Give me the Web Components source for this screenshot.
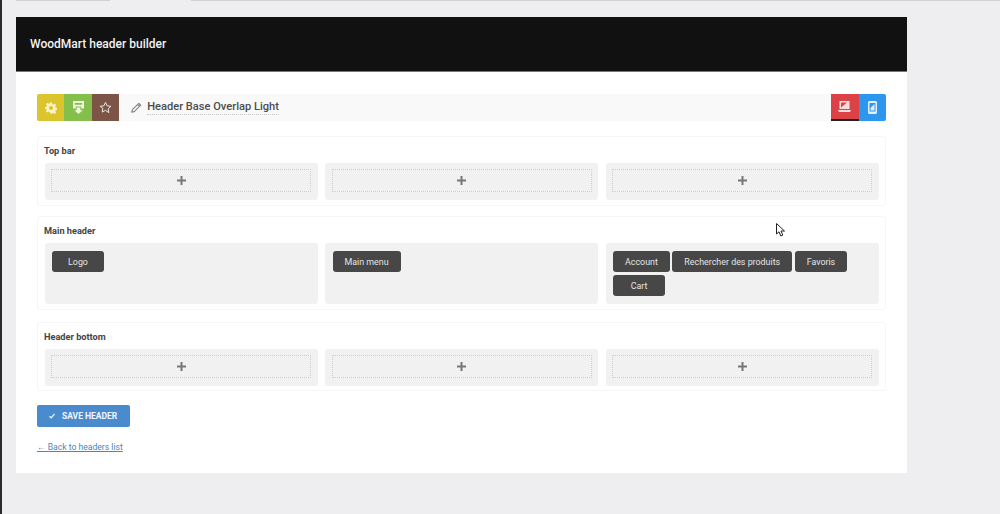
<!DOCTYPE html>
<html lang="en">
<head>
<meta charset="utf-8">
<title>WoodMart header builder</title>
<style>
  html, body { margin: 0; height: 100%; }
  body {
    background: #eeeef0;
    font-family: Roboto, "Open Sans", sans-serif;
    overflow: hidden;
  }
</style>
</head>
<body>
<wm-page>
  <wm-panel title="WoodMart header builder">
    <wm-toolbar name="Header Base Overlap Light"></wm-toolbar>

    <wm-row label="Top bar" style="--col-h:36px;--after:10px">
      <wm-col><wm-add></wm-add></wm-col>
      <wm-col><wm-add></wm-add></wm-col>
      <wm-col><wm-add></wm-add></wm-col>
    </wm-row>

    <wm-row label="Main header" style="--col-h:60px;--after:12px">
      <wm-col><wm-chip>Logo</wm-chip></wm-col>
      <wm-col><wm-chip>Main menu</wm-chip></wm-col>
      <wm-col>
        <wm-chip>Account</wm-chip>
        <wm-chip>Rechercher des produits</wm-chip>
        <wm-chip>Favoris</wm-chip>
        <wm-chip>Cart</wm-chip>
      </wm-col>
    </wm-row>

    <wm-row label="Header bottom" style="--col-h:35px;--after:14px">
      <wm-col><wm-add></wm-add></wm-col>
      <wm-col><wm-add></wm-add></wm-col>
      <wm-col><wm-add></wm-add></wm-col>
    </wm-row>

    <wm-save>SAVE HEADER</wm-save>
    <wm-back>← Back to headers list</wm-back>
  </wm-panel>
</wm-page>

<script>
class WmPage extends HTMLElement {
  constructor() {
    super();
    this.attachShadow({ mode: "open" });
  }
  connectedCallback() {
    this.shadowRoot.innerHTML = `
      <style>
        :host {
          display: block;
          position: relative;
          height: 514px;
          box-sizing: border-box;
          border-left: 2px solid #2b2b2d;
          padding: 17px 0 0 14px;
        }
        .strip { position: absolute; top: 0; height: 1px; background: #d2d2d4; }
        .cursor { position: absolute; left: 773px; top: 222px; }
      </style>
      <div class="strip" style="left:14px;width:94px"></div>
      <div class="strip" style="left:189px;width:809px"></div>
      <slot></slot>
      <svg class="cursor" width="12" height="16" viewBox="0 0 12 16">
        <path d="M1.5 1.5 V12 L4 9.8 L5.8 14 L7.8 13.1 L6 9 H9.5 Z" fill="#fff" stroke="#222" stroke-width="1"/>
      </svg>
    `;
  }
}

class WmPanel extends HTMLElement {
  constructor() {
    super();
    this.attachShadow({ mode: "open" });
  }
  connectedCallback() {
    this.shadowRoot.innerHTML = `
      <style>
        :host {
          display: block;
          width: 891px;
          height: 456px;
          background: #fff;
        }
        h1 {
          margin: 0;
          height: 55px;
          box-sizing: border-box;
          padding-left: 14px;
          display: flex;
          align-items: center;
          background: #111112;
          border-bottom: 1px solid #77777a;
          color: #f2f2f2;
          font-size: 12px;
          font-weight: 500;
        }
        .body { padding: 22px 21px 0; }
      </style>
      <h1>${this.getAttribute("title")}</h1>
      <div class="body"><slot></slot></div>
    `;
  }
}

class WmToolbar extends HTMLElement {
  constructor() {
    super();
    this.attachShadow({ mode: "open" });
  }
  connectedCallback() {
    this.shadowRoot.innerHTML = `
      <style>
        :host {
          display: flex;
          height: 27px;
          margin-bottom: 15px;
          background: #f9f9f9;
          color: #4c4c4c;
        }
        .btn {
          width: 27.4px;
          display: flex;
          align-items: center;
          justify-content: center;
          box-sizing: border-box;
        }
        .name {
          flex: 1;
          display: flex;
          align-items: center;
          gap: 5px;
          padding-left: 12px;
          font-size: 11.100px;
          font-weight: 500;
        }
        .name span { border-bottom: 1px dotted #c4c4c4; line-height: 14px; }
        .red { border-bottom: 2px solid #222; }
      </style>
      <div class="btn" style="background:#dcc42c;border-radius:2px 0 0 2px">
        <svg width="12" height="12" viewBox="0 0 24 24"><path fill="#fbf3c4" fill-rule="evenodd" d="M10 1h4l.7 3.300 2 .8L19.500 3.300l2.800 2.800-1.800 2.800.8 2 3.200.7v4l-3.200.7-.8 2 1.800 2.800-2.800 2.800-2.800-1.800-2 .8L14 23h-4l-.7-3.200-2-.8-2.800 1.800-2.800-2.800 1.800-2.800-.8-2L0 14v-4l3.200-.7.8-2-1.800-2.800 2.800-2.800 2.800 1.800 2-.8zM12 8a4 4 0 1 0 0 8 4 4 0 0 0 0-8z"/></svg>
      </div>
      <div class="btn" style="background:#84bf4c">
        <svg width="11" height="13" viewBox="0 0 12 14"><path fill="#eef7e2" fill-rule="evenodd" d="M0 0h12v8H9V6H3v2H0zM2 2v2h8V2zM4 7h4v3h2.500L6 14 1.500 10H4z"/></svg>
      </div>
      <div class="btn" style="background:#7d5547">
        <svg width="13" height="13" viewBox="0 0 24 24"><path fill="none" stroke="#f1e7e2" stroke-width="1.800" stroke-linejoin="round" d="M12 2.500l3 6.400 7 .9-5.100 4.800 1.300 6.900L12 17.200l-6.200 3.300 1.300-6.900L2 9.800l7-.9z"/></svg>
      </div>
      <div class="name">
        <svg width="11" height="11" viewBox="0 0 11 11"><path fill="none" stroke="#858585" stroke-width="1.200" stroke-linejoin="round" d="M7.800 1.300l1.900 1.900-6.400 6.400-2.500.6.600-2.500zM6.600 2.500l1.900 1.900"/></svg>
        <span>${this.getAttribute("name")}</span>
      </div>
      <div class="btn red" style="background:#dc4146">
        <svg width="13" height="12" viewBox="0 0 13 12"><path fill="#f7dcdc" fill-rule="evenodd" d="M1.500 0h10v8h-10zM3 1.500V6.500L9 1.500zM0 9h13l-1 2H1z"/></svg>
      </div>
      <div class="btn" style="background:#2d96ef;border-radius:0 2px 2px 0">
        <svg width="9" height="13" viewBox="0 0 9 13"><path fill="#e2f1fd" fill-rule="evenodd" d="M1.500 0h6A1.500 1.500 0 0 1 9 1.500v10A1.500 1.500 0 0 1 7.500 13h-6A1.500 1.500 0 0 1 0 11.500v-10A1.500 1.500 0 0 1 1.500 0zM1.500 2v8.500h6V2z"/><path fill="#e2f1fd" d="M2.500 7L6.500 3v6.500h-4z"/></svg>
      </div>
    `;
  }
}

class WmRow extends HTMLElement {
  constructor() {
    super();
    this.attachShadow({ mode: "open" });
  }
  connectedCallback() {
    this.shadowRoot.innerHTML = `
      <style>
        :host {
          display: block;
          box-sizing: border-box;
          border: 1px solid #f6f6f7;
          border-radius: 3px;
          padding: 0 6.500px 6px;
          margin-bottom: var(--after, 10px);
        }
        .label {
          height: 26px;
          margin-left: -.5px;
          display: flex;
          align-items: center;
          font-size: 9.200px;
          font-weight: 700;
          color: #444;
        }
        .cols {
          display: grid;
          grid-template-columns: repeat(3, 1fr);
          gap: 7.500px;
          height: var(--col-h, 36px);
        }
        ::slotted(wm-col) { min-width: 0; }
      </style>
      <div class="label">${this.getAttribute("label")}</div>
      <div class="cols"><slot></slot></div>
    `;
  }
}

class WmCol extends HTMLElement {
  constructor() {
    super();
    this.attachShadow({ mode: "open" });
  }
  connectedCallback() {
    this.shadowRoot.innerHTML = `
      <style>
        :host {
          display: flex;
          flex-wrap: wrap;
          align-content: flex-start;
          gap: 3px 2.500px;
          box-sizing: border-box;
          padding: 8px 7.500px;
          background: #f1f1f1;
          border-radius: 3px;
        }
      </style>
      <slot></slot>
    `;
  }
}

class WmAdd extends HTMLElement {
  constructor() {
    super();
    this.attachShadow({ mode: "open" });
  }
  connectedCallback() {
    this.shadowRoot.innerHTML = `
      <style>
        :host {
          display: flex;
          align-items: center;
          justify-content: center;
          flex: 1;
          height: 23px;
          margin: -2.500px -1px 0;
          box-sizing: border-box;
          border: 1px dotted #cfcfcf;
        }
      </style>
      <svg width="9" height="9" viewBox="0 0 9 9"><path fill="#777" d="M3.500 0h2v3.500H9v2H5.500V9h-2V5.500H0v-2h3.500z"/></svg>
    `;
  }
}

class WmChip extends HTMLElement {
  constructor() {
    super();
    this.attachShadow({ mode: "open" });
  }
  connectedCallback() {
    this.shadowRoot.innerHTML = `
      <style>
        :host {
          display: flex;
          align-items: center;
          justify-content: center;
          box-sizing: border-box;
          min-width: 52px;
          height: 21px;
          padding: 0 12px;
          background: #474747;
          border-radius: 3px;
          color: #e4e4e4;
          font-size: 8.900px;
          white-space: nowrap;
        }
      </style>
      <slot></slot>
    `;
  }
}

class WmSave extends HTMLElement {
  constructor() {
    super();
    this.attachShadow({ mode: "open" });
  }
  connectedCallback() {
    this.shadowRoot.innerHTML = `
      <style>
        :host {
          display: flex;
          align-items: center;
          gap: 7px;
          box-sizing: border-box;
          width: 93px;
          height: 22px;
          padding-left: 12px;
          background: #4a8bce;
          border-radius: 2px;
          color: #f2f6fb;
          font-size: 8.500px;
          font-weight: 700;
        }
      </style>
      <svg width="6" height="6" viewBox="0 0 6 6"><path fill="none" stroke="#f2f6fb" stroke-width="1.200" d="M.5 3.200l1.700 1.600L5.500 1"/></svg>
      <slot></slot>
    `;
  }
}

class WmBack extends HTMLElement {
  constructor() {
    super();
    this.attachShadow({ mode: "open" });
  }
  connectedCallback() {
    this.shadowRoot.innerHTML = `
      <style>
        :host { display: block; margin-top: 14px; font-size: 8.600px; line-height: 12px; }
        a { color: #4a86bb; }
      </style>
      <a href="#"><slot></slot></a>
    `;
  }
}

customElements.define("wm-page", WmPage);
customElements.define("wm-panel", WmPanel);
customElements.define("wm-toolbar", WmToolbar);
customElements.define("wm-row", WmRow);
customElements.define("wm-col", WmCol);
customElements.define("wm-add", WmAdd);
customElements.define("wm-chip", WmChip);
customElements.define("wm-save", WmSave);
customElements.define("wm-back", WmBack);
</script>
</body>
</html>
